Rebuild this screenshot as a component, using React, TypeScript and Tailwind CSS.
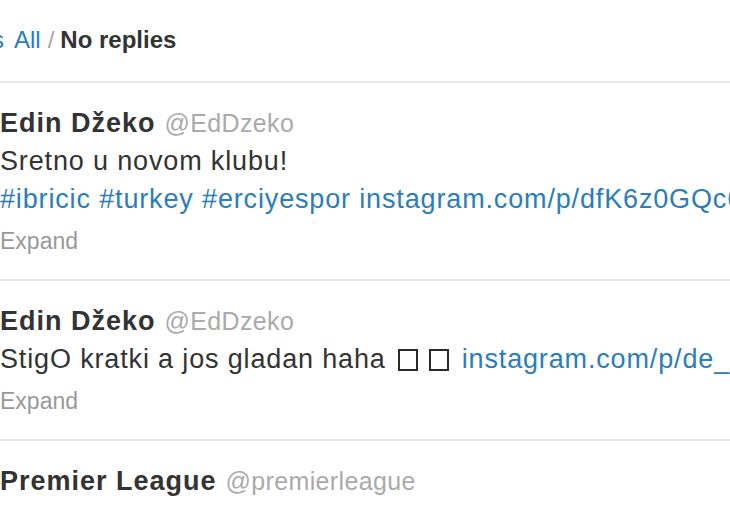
const tweets = [
  {
    name: 'Edin Džeko',
    handle: '@EdDzeko',
    lines: [
      <>Sretno u novom klubu!</>,
      <span className="text-[#2b7dbd]">#ibricic #turkey #erciyespor instagram.com/p/dfK6z0GQc6/</span>,
    ],
    expand: true,
  },
  {
    name: 'Edin Džeko',
    handle: '@EdDzeko',
    lines: [
      <>
        StigO kratki a jos gladan haha
        <span className="inline-block w-[20px] h-[22px] border-[2.5px] border-[#2a2a2a] align-[-3px] ml-[12px]" />
        <span className="inline-block w-[20px] h-[22px] border-[2.5px] border-[#2a2a2a] align-[-3px] ml-[11px]" />
        <span className="ml-[13px] text-[#2b7dbd]">instagram.com/p/de_4kJGQdK/</span>
      </>,
    ],
    expand: true,
  },
  {
    name: 'Premier League',
    handle: '@premierleague',
    lines: [],
    expand: false,
  },
];

function Tweet({ t }: { t: (typeof tweets)[number] }) {
  return (
    <div className="border-t-2 border-[#e6e6e6] pt-[21px] pb-[19px]">
      <div className="flex items-baseline whitespace-nowrap leading-[38px]">
        <span className="text-[27px] font-bold text-[#333] tracking-[1px]">{t.name}</span>
        <span className="ml-[9px] text-[25px] text-[#aaa] tracking-[0.35px]">{t.handle}</span>
      </div>
      {t.lines.map((l, i) => (
        <div key={i} className="text-[27px] leading-[38px] text-[#333] whitespace-nowrap tracking-[0.85px]">
          {l}
        </div>
      ))}
      {t.expand && <div className="mt-[4px] text-[23px] leading-[38px] text-[#999]">Expand</div>}
    </div>
  );
}

export default function App() {
  return (
    <div className="w-[730px] h-[510px] overflow-hidden bg-white font-['Liberation_Sans',Arial,sans-serif]">
      {/* header */}
      <div className="h-[81px] pt-[25px] text-[24px] leading-[30px] whitespace-nowrap flex">
        <span className="-ml-[8px] text-[#2b7dbd]">s</span>
        <span className="ml-[10px] text-[#2b7dbd]">All</span>
        <span className="ml-[7px] text-[#9aa7b3]">/</span>
        <span className="ml-[6px] font-bold text-[#333]">No replies</span>
      </div>
      {tweets.map((t, i) => (
        <Tweet key={i} t={t} />
      ))}
    </div>
  );
}
